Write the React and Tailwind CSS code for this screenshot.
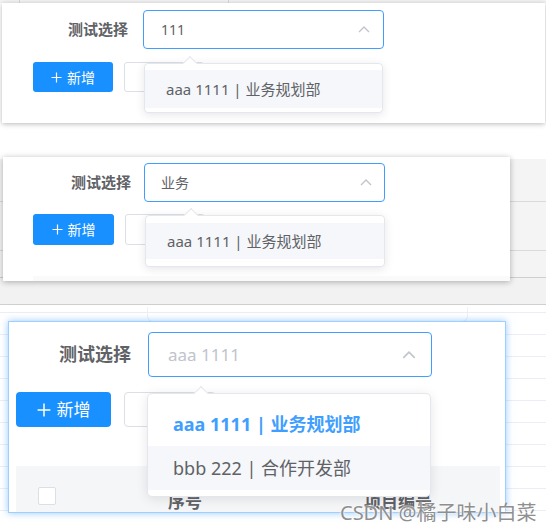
import React from 'react';

const font = "font-['Noto_Sans','Noto_Sans_CJK_SC',sans-serif]";

const Chevron = ({ className }) => (
  <svg viewBox="0 0 12 7" className={className} fill="none">
    <polyline points="1,6 6,1 11,6" stroke="#c0c4cc" strokeWidth="1.4" />
  </svg>
);

const Arrow = ({ className }) => (
  <div className={`absolute w-[10px] h-[10px] rotate-45 bg-white border-l border-t border-[#e4e7ed] ${className}`} />
);

const Plus = ({ size }) => (
  <svg width={size} height={size} viewBox="0 0 12 12" fill="none">
    <path d="M6 0.5v11M0.5 6h11" stroke="#fff" strokeWidth="1.3" />
  </svg>
);

const App = () => {
  return (
    <div className={`w-[546px] h-[532px] overflow-hidden bg-white ${font}`}>
      {/* first shot */}
      <div className="h-[157px] flex flex-col">
        <div className="h-[3px] flex bg-[#f3f3f3]">
          <div className="w-[20px] border-r border-[#d8d8d8]" />
          <div className="w-[209px] border-r border-[#d8d8d8]" />
          <div className="flex-1" />
        </div>
        <div className="relative ml-[2px] w-[543px] h-[120px] bg-white shadow-[0_1px_5px_rgba(0,0,0,0.28)]">
          <div className="flex items-center pt-[7px]">
            <div className="w-[126px] text-right text-[15px] font-bold text-[#606266]">测试选择</div>
            <div className="ml-[15px] w-[241px] h-[39px] flex items-center justify-between pl-[17px] pr-[13px] border border-[#409eff] rounded-[4px]">
              <span className="text-[14px] text-[#606266]">111</span>
              <Chevron className="w-[12px] h-[7px]" />
            </div>
          </div>
          <div className="flex mt-[13px] pl-[31px] gap-[11px]">
            <div className="w-[80px] h-[30px] flex items-center justify-center gap-[5px] bg-[#1890ff] rounded-[3px] text-white text-[14px]">
              <Plus size={11} />
              <span>新增</span>
            </div>
            <div className="w-[80px] h-[30px] border border-[#dcdfe6] rounded-[3px] bg-white" />
          </div>
          <div className="absolute left-[142px] top-[60px] w-[239px] h-[50px] py-[6px] bg-white border border-[#e4e7ed] rounded-[4px] shadow-[0_2px_10px_rgba(0,0,0,0.1)]">
            <Arrow className="-top-[6px] left-[40px]" />
            <div className="relative h-[38px] flex items-center pl-[21px] bg-[#f5f7fa] text-[15px] text-[#606266]">aaa 1111 | 业务规划部</div>
          </div>
        </div>
      </div>

      {/* second shot */}
      <div className="relative h-[148px]">
        <div className="flex flex-col h-full">
          <div className="h-[2px] bg-white" />
          <div className="h-[43px] border-b border-[#dadada] bg-[#f4f4f4]" />
          <div className="h-[49px] border-b border-[#dadada] bg-[#f4f4f4]" />
          <div className="h-[27px] border-b border-[#cfcfcf] bg-[#f4f4f4]" />
          <div className="h-[27px] border-b border-[#cfcfcf] bg-[#f2f2f2]" />
        </div>
        <div className="absolute top-0 left-[3px] w-[507px] h-[124px] bg-white shadow-[0_1px_6px_rgba(0,0,0,0.3)]">
          <div className="flex items-center pt-[6px]">
            <div className="w-[128px] text-right text-[15px] font-bold text-[#606266]">测试选择</div>
            <div className="ml-[13px] w-[241px] h-[39px] flex items-center justify-between pl-[16px] pr-[12px] border border-[#409eff] rounded-[4px]">
              <span className="text-[14px] text-[#606266]">业务</span>
              <Chevron className="w-[12px] h-[7px]" />
            </div>
          </div>
          <div className="flex mt-[12px] pl-[30px] gap-[11px]">
            <div className="w-[81px] h-[31px] flex items-center justify-center gap-[5px] bg-[#1890ff] rounded-[3px] text-white text-[14px]">
              <Plus size={11} />
              <span>新增</span>
            </div>
            <div className="w-[80px] h-[31px] border border-[#dcdfe6] rounded-[3px] bg-white" />
          </div>
          <div className="absolute left-[30px] right-0 bottom-0 h-[5px] bg-[#fafafa]" />
          <div className="absolute left-[142px] top-[58px] w-[240px] h-[52px] py-[7px] bg-white border border-[#e4e7ed] rounded-[4px] shadow-[0_2px_10px_rgba(0,0,0,0.1)]">
            <Arrow className="-top-[6px] left-[40px]" />
            <div className="relative h-[36px] flex items-center pl-[21px] bg-[#f5f7fa] text-[15px] text-[#606266]">aaa 1111 | 业务规划部</div>
          </div>
        </div>
      </div>

      {/* third shot */}
      <div className="relative h-[227px]">
        <div className="flex flex-col">
          <div className="h-[8px] border-b border-[#ebeef5]" />
          {[0, 1, 2, 3, 4, 5, 6, 7, 8, 9].map((i) => (
            <div key={i} className="h-[22px] border-b border-[#ebeef5]" />
          ))}
        </div>
        <div className="absolute left-[147px] top-[2px] w-[321px] h-[15px] rounded-b-[6px] border border-t-0 border-[#eef0f4]" />
        <div className="absolute left-[8px] top-[16px] w-[498px] h-[192px] overflow-hidden bg-white border border-[#a0cfff] shadow-[0_0_7px_rgba(64,158,255,0.55)]">
          <div className="flex items-center pt-[10px]">
            <div className="w-[122px] text-right text-[18px] font-bold text-[#606266]">测试选择</div>
            <div className="ml-[17px] w-[284px] h-[45px] flex items-center justify-between pl-[19px] pr-[15px] border border-[#409eff] rounded-[4px]">
              <span className="text-[17px] text-[#c0c4cc]">aaa 1111</span>
              <Chevron className="w-[14px] h-[8px]" />
            </div>
          </div>
          <div className="flex mt-[15px] pl-[7px] gap-[13px]">
            <div className="w-[95px] h-[35px] flex items-center justify-center gap-[6px] bg-[#1890ff] rounded-[4px] text-white text-[17px]">
              <Plus size={14} />
              <span>新增</span>
            </div>
            <div className="w-[92px] h-[35px] border border-[#dcdfe6] rounded-[4px] bg-white" />
          </div>
          <div className="mt-[39px] ml-[7px] w-[484px] h-[60px] flex items-center bg-[#f5f6f8] text-[17px] font-bold text-[#606266]">
            <div className="ml-[22px] w-[18px] h-[18px] bg-white border border-[#dcdfe6] rounded-[2px]" />
            <div className="ml-[112px] mt-[12px]">序号</div>
            <div className="ml-[162px] mt-[12px]">项目编号</div>
          </div>
          <div className="absolute left-[138px] top-[71px] w-[284px] h-[104px] py-[8px] bg-white border border-[#e4e7ed] rounded-[5px] shadow-[0_2px_12px_rgba(0,0,0,0.1)]">
            <Arrow className="-top-[6px] left-[48px]" />
            <div className="relative h-[44px] flex items-center pl-[25px] text-[18px] font-bold text-[#409eff]">aaa 1111 | 业务规划部</div>
            <div className="h-[44px] flex items-center pl-[25px] bg-[#f5f7fa] text-[18px] text-[#606266]">bbb 222 | 合作开发部</div>
          </div>
        </div>
        <div className="absolute left-[340px] top-[196px] text-[20px] leading-[24px] text-[#8f8f8f] [text-shadow:0_0_2px_#fff,0_0_2px_#fff]">CSDN @橘子味小白菜</div>
      </div>
    </div>
  );
};

export default App;
